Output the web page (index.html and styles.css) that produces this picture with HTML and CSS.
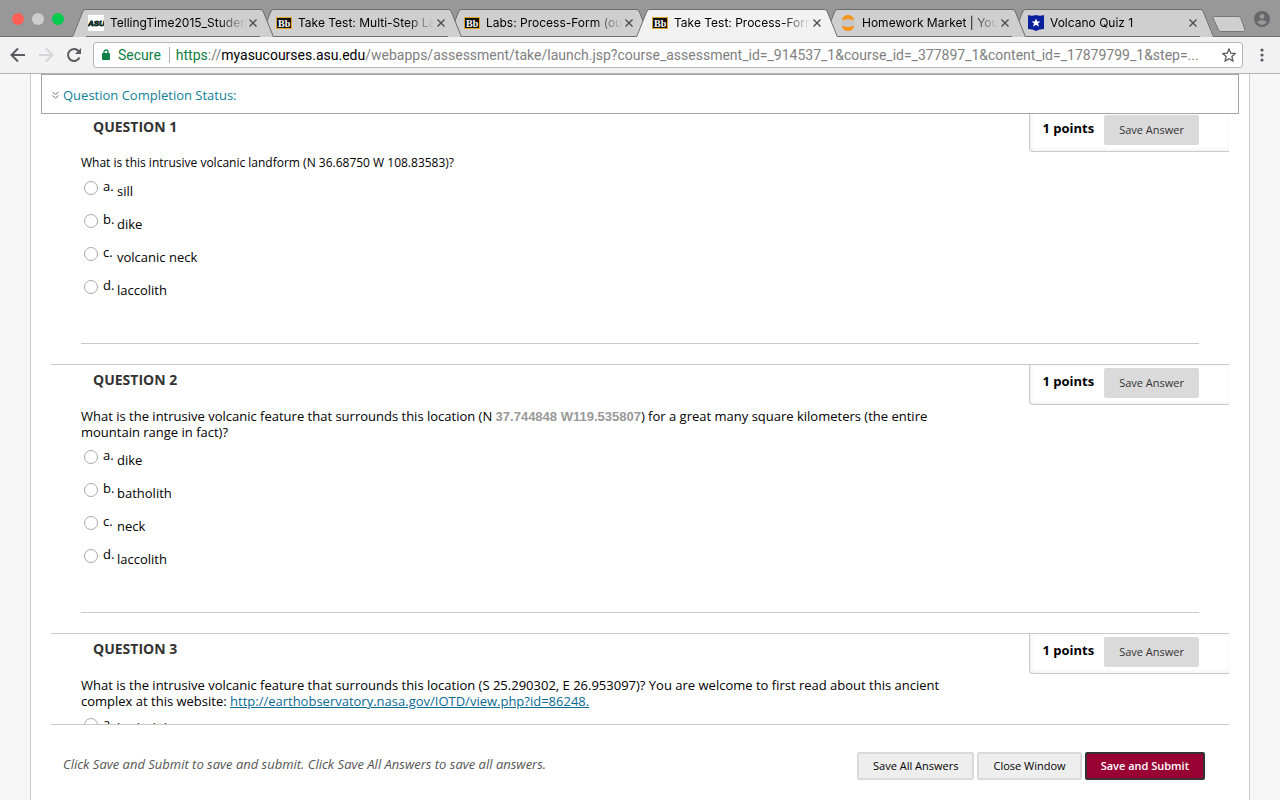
FILE: index.html
```html
<!DOCTYPE html>
<html lang="en">
<head>
    <meta charset="UTF-8">
    <meta name="viewport" content="width=device-width, initial-scale=1.0">
    <title>Take Test: Process-Form</title>
    <link rel="stylesheet" href="styles.css">
</head>
<body>
    <!-- Browser window -->
    <div class="tab-strip">
        <div class="lights">
            <span class="light red"></span>
            <span class="light gray"></span>
            <span class="light green"></span>
        </div>
        <div class="tabs">
            <div class="tab">
                <svg class="slope" viewBox="0 0 14 28"><path class="fill" d="M0 28L11 2Q12 .5 14 .5V28z"/><path class="edge" d="M.5 28L11 2Q12 .5 14 .5"/></svg>
                <div class="tab-body">
                    <svg class="favicon" viewBox="0 0 16 16"><rect width="16" height="16" fill="#fff"/><text x="0" y="11" font-family="Liberation Sans" font-weight="bold" font-style="italic" font-size="8" fill="#0c2a20" stroke="#0c2a20" stroke-width=".8">ASU</text></svg>
                    <span class="tab-title">TellingTime2015_Student</span>
                    <button class="tab-close" aria-label="Close tab"><svg viewBox="0 0 8 8"><path d="M.5 .5l7 7M7.5 .5l-7 7"/></svg></button>
                </div>
                <svg class="slope" viewBox="0 0 14 28"><path class="fill" d="M14 28L3 2Q2 .5 0 .5V28z"/><path class="edge" d="M13.500 28L3 2Q2 .5 0 .5"/></svg>
            </div>
            <div class="tab">
                <svg class="slope" viewBox="0 0 14 28"><path class="fill" d="M0 28L11 2Q12 .5 14 .5V28z"/><path class="edge" d="M.5 28L11 2Q12 .5 14 .5"/></svg>
                <div class="tab-body">
                    <svg class="favicon" viewBox="0 0 16 16"><rect x=".5" y="2.500" width="15" height="11" fill="#111" stroke="#e0a526"/><text x="2" y="11.500" font-family="Liberation Serif" font-weight="bold" font-size="10" fill="#fff">Bb</text></svg>
                    <span class="tab-title">Take Test: Multi-Step La</span>
                    <button class="tab-close" aria-label="Close tab"><svg viewBox="0 0 8 8"><path d="M.5 .5l7 7M7.5 .5l-7 7"/></svg></button>
                </div>
                <svg class="slope" viewBox="0 0 14 28"><path class="fill" d="M14 28L3 2Q2 .5 0 .5V28z"/><path class="edge" d="M13.500 28L3 2Q2 .5 0 .5"/></svg>
            </div>
            <div class="tab">
                <svg class="slope" viewBox="0 0 14 28"><path class="fill" d="M0 28L11 2Q12 .5 14 .5V28z"/><path class="edge" d="M.5 28L11 2Q12 .5 14 .5"/></svg>
                <div class="tab-body">
                    <svg class="favicon" viewBox="0 0 16 16"><rect x=".5" y="2.500" width="15" height="11" fill="#111" stroke="#e0a526"/><text x="2" y="11.500" font-family="Liberation Serif" font-weight="bold" font-size="10" fill="#fff">Bb</text></svg>
                    <span class="tab-title">Labs: Process-Form (out</span>
                    <button class="tab-close" aria-label="Close tab"><svg viewBox="0 0 8 8"><path d="M.5 .5l7 7M7.5 .5l-7 7"/></svg></button>
                </div>
                <svg class="slope" viewBox="0 0 14 28"><path class="fill" d="M14 28L3 2Q2 .5 0 .5V28z"/><path class="edge" d="M13.500 28L3 2Q2 .5 0 .5"/></svg>
            </div>
            <div class="tab active">
                <svg class="slope" viewBox="0 0 14 28"><path class="fill" d="M0 28L11 2Q12 .5 14 .5V28z"/><path class="edge" d="M.5 28L11 2Q12 .5 14 .5"/></svg>
                <div class="tab-body">
                    <svg class="favicon" viewBox="0 0 16 16"><rect x=".5" y="2.500" width="15" height="11" fill="#111" stroke="#e0a526"/><text x="2" y="11.500" font-family="Liberation Serif" font-weight="bold" font-size="10" fill="#fff">Bb</text></svg>
                    <span class="tab-title">Take Test: Process-Form</span>
                    <button class="tab-close" aria-label="Close tab"><svg viewBox="0 0 8 8"><path d="M.5 .5l7 7M7.5 .5l-7 7"/></svg></button>
                </div>
                <svg class="slope" viewBox="0 0 14 28"><path class="fill" d="M14 28L3 2Q2 .5 0 .5V28z"/><path class="edge" d="M13.500 28L3 2Q2 .5 0 .5"/></svg>
            </div>
            <div class="tab">
                <svg class="slope" viewBox="0 0 14 28"><path class="fill" d="M0 28L11 2Q12 .5 14 .5V28z"/><path class="edge" d="M.5 28L11 2Q12 .5 14 .5"/></svg>
                <div class="tab-body">
                    <svg class="favicon" viewBox="0 0 16 16"><circle cx="8" cy="8" r="7" fill="#c8c8c8"/><path d="M2 3.500Q4 0 8 0T14 3.500L13 5.500Q11 4 8 4T3 5.500zM2 12.500Q4 16 8 16T14 12.500L13 10.500Q11 12 8 12T3 10.500z" fill="#f7941d"/></svg>
                    <span class="tab-title">Homework Market | You</span>
                    <button class="tab-close" aria-label="Close tab"><svg viewBox="0 0 8 8"><path d="M.5 .5l7 7M7.5 .5l-7 7"/></svg></button>
                </div>
                <svg class="slope" viewBox="0 0 14 28"><path class="fill" d="M14 28L3 2Q2 .5 0 .5V28z"/><path class="edge" d="M13.500 28L3 2Q2 .5 0 .5"/></svg>
            </div>
            <div class="tab">
                <svg class="slope" viewBox="0 0 14 28"><path class="fill" d="M0 28L11 2Q12 .5 14 .5V28z"/><path class="edge" d="M.5 28L11 2Q12 .5 14 .5"/></svg>
                <div class="tab-body">
                    <svg class="favicon" viewBox="0 0 16 16"><path d="M0 0Q4 1.500 8 0Q12 1.500 16 0V14Q11 14 8 16Q5 14 0 14z" fill="#0a1f9c"/><path d="M8 3.500l1.300 3h3.200L10 8.600l1 3.200-3-2-3 2 1-3.200-2.500-2.100h3.200z" fill="#fff"/></svg>
                    <span class="tab-title">Volcano Quiz 1</span>
                    <button class="tab-close" aria-label="Close tab"><svg viewBox="0 0 8 8"><path d="M.5 .5l7 7M7.5 .5l-7 7"/></svg></button>
                </div>
                <svg class="slope" viewBox="0 0 14 28"><path class="fill" d="M14 28L3 2Q2 .5 0 .5V28z"/><path class="edge" d="M13.500 28L3 2Q2 .5 0 .5"/></svg>
            </div>
        </div>
        <button class="new-tab" aria-label="New tab"><svg width="34" height="17" viewBox="0 0 34 17"><path d="M2.500 .5H26Q28 .5 28.800 2L33 14Q33 15.500 31.500 15.500H9Q7.500 15.500 6.500 14L1 2Q1 .5 2.500 .5z" fill="#cfcfcf" stroke="#777"/></svg></button>
        <button class="profile" aria-label="Profile"><svg width="16" height="16" viewBox="0 0 16 16"><circle cx="8" cy="8" r="8" fill="#67676b"/><circle cx="8" cy="5.500" r="2.400" fill="#989898"/><path d="M3.300 11.500Q4 9.200 8 9.200T12.700 11.500Q11 13.800 8 13.800T3.300 11.500z" fill="#989898"/></svg></button>
    </div>

    <div class="toolbar">
        <button class="nav" aria-label="Back"><svg width="16" height="16" viewBox="0 0 16 16" stroke="#5a5a60"><path d="M15 8H2M8 1.500L1.500 8L8 14.500"/></svg></button>
        <button class="nav" aria-label="Forward"><svg width="16" height="16" viewBox="0 0 16 16" stroke="#d5d5d8"><path d="M1 8H14M8 1.500L14.500 8L8 14.500"/></svg></button>
        <button class="nav" aria-label="Reload"><svg width="16" height="16" viewBox="0 0 16 16" stroke="#5a5a60"><path d="M13.500 10.500A6 6 0 1 1 12.500 4L14 6"/><path d="M15 1V7H9z" fill="#5a5a60" stroke="none"/></svg></button>
        <div class="address">
            <svg class="lock" width="8" height="12" viewBox="0 0 8 12"><rect y="4" width="8" height="7" rx="1" fill="#0b8043"/><path d="M2 5V3a2 2 0 0 1 4 0V5" fill="none" stroke="#0b8043" stroke-width="1.300"/></svg>
            <span class="secure">Secure</span>
            <span class="url"><span class="scheme">https</span>://<b>myasucourses.asu.edu</b>/webapps/assessment/take/launch.jsp?course_assessment_id=_914537_1&amp;course_id=_377897_1&amp;content_id=_17879799_1&amp;step=...</span>
            <svg class="star" width="14" height="14" viewBox="0 0 14 14"><path d="M7 1l1.800 4.200 4.500.4-3.400 3 1 4.400L7 10.700 3.100 13l1-4.400-3.400-3 4.500-.4z" fill="none" stroke="#5a5a60" stroke-width="1.300"/></svg>
        </div>
        <button class="menu" aria-label="Menu"><svg width="4" height="14" viewBox="0 0 4 14" fill="#5a5a60"><circle cx="2" cy="2" r="1.600"/><circle cx="2" cy="7" r="1.600"/><circle cx="2" cy="12" r="1.600"/></svg></button>
    </div>

    <!-- Test page -->
    <div class="content">
        <div class="status">
            <svg width="7" height="8" viewBox="0 0 7 8"><path d="M.5 1l3 2.500L6.500 1M.5 4.500l3 2.500 3-2.500" fill="none" stroke="#777"/></svg>
            <a href="#questions">Question Completion Status:</a>
        </div>

        <form class="test">
            <div class="questions" id="questions">
                <section class="question">
                    <div class="question-head">
                        <h3>QUESTION 1</h3>
                        <div class="points"><strong>1 points</strong><button type="button" class="save">Save Answer</button></div>
                    </div>
                    <div class="question-body">
                        <p class="small">What is this intrusive volcanic landform (N 36.68750 W 108.83583)?</p>
                        <div class="option"><input type="radio" name="q1" id="q1a"><label for="q1a"><span class="letter">a.</span><span class="answer">sill</span></label></div>
                        <div class="option"><input type="radio" name="q1" id="q1b"><label for="q1b"><span class="letter">b.</span><span class="answer">dike</span></label></div>
                        <div class="option"><input type="radio" name="q1" id="q1c"><label for="q1c"><span class="letter">c.</span><span class="answer">volcanic neck</span></label></div>
                        <div class="option"><input type="radio" name="q1" id="q1d"><label for="q1d"><span class="letter">d.</span><span class="answer">laccolith</span></label></div>
                    </div>
                </section>

                <section class="question">
                    <div class="question-head">
                        <h3>QUESTION 2</h3>
                        <div class="points"><strong>1 points</strong><button type="button" class="save">Save Answer</button></div>
                    </div>
                    <div class="question-body">
                        <p>What is the intrusive volcanic feature that surrounds this location (N <span class="coords">37.744848 W119.535807</span>) for a great many square kilometers (the entire mountain range in fact)?</p>
                        <div class="option"><input type="radio" name="q2" id="q2a"><label for="q2a"><span class="letter">a.</span><span class="answer">dike</span></label></div>
                        <div class="option"><input type="radio" name="q2" id="q2b"><label for="q2b"><span class="letter">b.</span><span class="answer">batholith</span></label></div>
                        <div class="option"><input type="radio" name="q2" id="q2c"><label for="q2c"><span class="letter">c.</span><span class="answer">neck</span></label></div>
                        <div class="option"><input type="radio" name="q2" id="q2d"><label for="q2d"><span class="letter">d.</span><span class="answer">laccolith</span></label></div>
                    </div>
                </section>

                <section class="question">
                    <div class="question-head">
                        <h3>QUESTION 3</h3>
                        <div class="points"><strong>1 points</strong><button type="button" class="save">Save Answer</button></div>
                    </div>
                    <div class="question-body">
                        <p>What is the intrusive volcanic feature that surrounds this location (S 25.290302, E 26.953097)? You are welcome to first read about this ancient complex at this website: <a href="#">http://earthobservatory.nasa.gov/IOTD/view.php?id=86248.</a></p>
                        <div class="option"><input type="radio" name="q3" id="q3a"><label for="q3a"><span class="letter">a.</span><span class="answer">batholith</span></label></div>
                    </div>
                </section>
            </div>

            <div class="submit-bar">
                <p>Click Save and Submit to save and submit. Click Save All Answers to save all answers.</p>
                <button type="button">Save All Answers</button>
                <button type="button">Close Window</button>
                <button type="submit" class="primary">Save and Submit</button>
            </div>
        </form>
    </div>
</body>
</html>
```
FILE: styles.css
```css
* {
    box-sizing: border-box;
}

body {
    margin: 0;
    height: 100vh;
    display: flex;
    flex-direction: column;
    overflow: hidden;
    background-color: #f7f7f7;
    font-family: "Open Sans", "Noto Sans", sans-serif;
    font-size: 13px;
    color: #000;
}

button {
    font-family: inherit;
    cursor: pointer;
}

p, h3 {
    margin: 0;
}

/* tabs */
.tab-strip {
    display: flex;
    height: 37px;
    padding-right: 10px;
    background-color: #989898;
    border-bottom: 1px solid #707070;
    font-family: Inter, sans-serif;
    font-size: 12px;
}

.lights {
    display: flex;
    gap: 8px;
    padding: 13px 8px 0 12px;
}

.light {
    width: 12px;
    height: 12px;
    border-radius: 50%;
}

.red {
    background-color: #ff5f57;
}

.gray {
    background-color: #cdcdcd;
}

.green {
    background-color: #00cb4e;
}

.tabs {
    flex: 1;
    display: flex;
    align-items: flex-end;
    height: 37px;
    min-width: 0;
}

.tab {
    flex: 1 1 14px;
    min-width: 0;
    display: flex;
    position: relative;
    height: 28px;
    margin-right: -14px;
    z-index: 1;
}

.tab:nth-child(1) { z-index: 6; }
.tab:nth-child(2) { z-index: 5; }
.tab:nth-child(3) { z-index: 4; }
.tab:nth-child(5) { z-index: 2; }
.tab.active { z-index: 7; }

.tab:last-child {
    margin-right: 0;
}

.slope {
    flex: none;
    width: 14px;
    height: 28px;
}

.fill {
    fill: #cfcfcf;
}

.edge {
    fill: none;
    stroke: #6c6c6c;
}

.tab-body {
    flex: 1;
    min-width: 0;
    display: flex;
    align-items: center;
    background-color: #cfcfcf;
    border-top: 1px solid #6c6c6c;
    border-bottom: 1px solid #707070;
}

.active .fill {
    fill: #f2f2f2;
}

.active .tab-body {
    background-color: #f2f2f2;
    border-bottom-color: #f2f2f2;
}

.favicon {
    flex: none;
    width: 16px;
    height: 16px;
    margin: 0 6px 0 2px;
}

.tab-title {
    flex: 1;
    padding-bottom: 2px;
    overflow: hidden;
    white-space: nowrap;
    -webkit-mask-image: linear-gradient(to left, transparent, #000 28px);
    mask-image: linear-gradient(to left, transparent, #000 28px);
}

.tab-close {
    display: flex;
    padding: 0;
    margin: 0 3px 0 3px;
    border: 0;
    background: none;
}

.tab-close svg {
    width: 8px;
    height: 8px;
    stroke: #4c4c4c;
    stroke-width: 1.4;
}

.new-tab, .profile {
    align-self: flex-start;
    display: flex;
    padding: 0;
    border: 0;
    background: none;
}

.new-tab {
    margin: 16px 8px 0 -2px;
}

.profile {
    margin-top: 11px;
}

/* toolbar */
.toolbar {
    display: flex;
    align-items: center;
    height: 37px;
    padding: 0 16px 0 10px;
    background-color: #f2f2f2;
    border-bottom: 1px solid #b2b2b2;
}

.nav {
    display: flex;
    padding: 0;
    margin-right: 12px;
    border: 0;
    background: none;
}

.nav svg {
    fill: none;
    stroke-width: 2;
}

.nav:nth-child(3) {
    margin-right: 11px;
}

.address {
    flex: 1;
    min-width: 0;
    display: flex;
    align-items: center;
    height: 26px;
    padding: 0 6px 0 8px;
    background-color: #fff;
    border: 1px solid #b5b5b5;
    border-radius: 3px;
    font-family: Roboto, sans-serif;
    font-size: 14px;
    color: #808080;
}

.secure {
    margin: 0 6px 0 8px;
    padding-right: 8px;
    border-right: 1px solid #b0b0b0;
    color: #0b8043;
}

.url {
    flex: 1;
    overflow: hidden;
    white-space: nowrap;
}

.url b {
    font-weight: normal;
    color: #000;
}

.scheme {
    color: #0b8043;
}

.menu {
    display: flex;
    padding: 0;
    margin-left: 17px;
    border: 0;
    background: none;
}

/* page */
.content {
    flex: 1;
    min-height: 0;
    display: flex;
    flex-direction: column;
    margin: 0 30px;
    background-color: #fff;
    border: 1px solid #cacaca;
    border-width: 0 1px;
}

.status {
    position: relative;
    z-index: 1;
    display: flex;
    align-items: center;
    gap: 4px;
    height: 40px;
    margin: 0 10px;
    padding: 2px 10px 0;
    flex: none;
    background-color: #fff;
    border: 1px solid #a4a4a4;
}

.status a {
    font-size: 13px;
    color: #0f7f99;
    text-decoration: none;
}

.test {
    flex: 1;
    min-height: 0;
    display: flex;
    flex-direction: column;
    margin: -3px 20px 0;
}

.questions {
    flex: 1;
    min-height: 0;
    overflow: hidden;
}

.question {
    padding: 0 30px 20px;
    border-top: 1px solid #cacaca;
}

.question-head {
    display: flex;
    justify-content: space-between;
    height: 43px;
    margin-right: -30px;
    padding-left: 12px;
}

.question-head h3 {
    padding-top: 6px;
    font-size: 14px;
    line-height: 18px;
    color: #333;
}

.points {
    display: flex;
    align-items: flex-start;
    gap: 10px;
    height: 40px;
    padding: 3px 30px 0 12px;
    border: 1px solid #cacaca;
    border-width: 0 0 1px 1px;
    border-bottom-left-radius: 4px;
    box-shadow: inset 1px -1px 4px #eee;
}

.points strong {
    padding-top: 4px;
    line-height: 18px;
}

.save {
    height: 30px;
    padding: 0 15px 2px;
    background-color: #dadada;
    border: 0;
    border-radius: 2px;
    font-size: 11px;
    color: #333;
}

.question-body {
    padding-bottom: 39px;
    border-bottom: 1px solid #cacaca;
}

.question-body p {
    max-width: 880px;
    margin-bottom: 1px;
    line-height: 16px;
}

.question:last-child p {
    margin-bottom: 0;
}

.question-body .small {
    font-size: 12px;
}

.question-body a {
    color: #0a6a94;
}

.coords {
    font-family: "Liberation Sans", Arial, sans-serif;
    font-weight: bold;
    line-height: 1;
    color: #999;
}

.option {
    display: flex;
    align-items: flex-start;
    height: 33px;
    padding: 9px 0 0 3px;
}

.option input {
    appearance: none;
    flex: none;
    width: 14px;
    height: 14px;
    margin: 0 5px 0 0;
    background-color: #fff;
    border: 1px solid #a8a8a8;
    border-radius: 50%;
}

.option label {
    display: flex;
}

.letter {
    width: 14px;
    line-height: 10px;
}

.answer {
    line-height: 20px;
}

/* bottom bar */
.submit-bar {
    display: flex;
    align-items: flex-start;
    gap: 3px;
    height: 76px;
    padding: 27px 24px 0 12px;
    border-top: 1px solid #cacaca;
}

.submit-bar p {
    flex: 1;
    line-height: 24px;
    font-style: italic;
    color: #555;
}

.submit-bar button {
    height: 28px;
    padding: 0 14px 2px;
    background-color: #eee;
    border: 2px solid #dadada;
    border-radius: 2px;
    font-size: 11px;
    color: #000;
}

.submit-bar .primary {
    background-color: #990033;
    border-color: #333;
    font-weight: 600;
    color: #fff;
}
```
